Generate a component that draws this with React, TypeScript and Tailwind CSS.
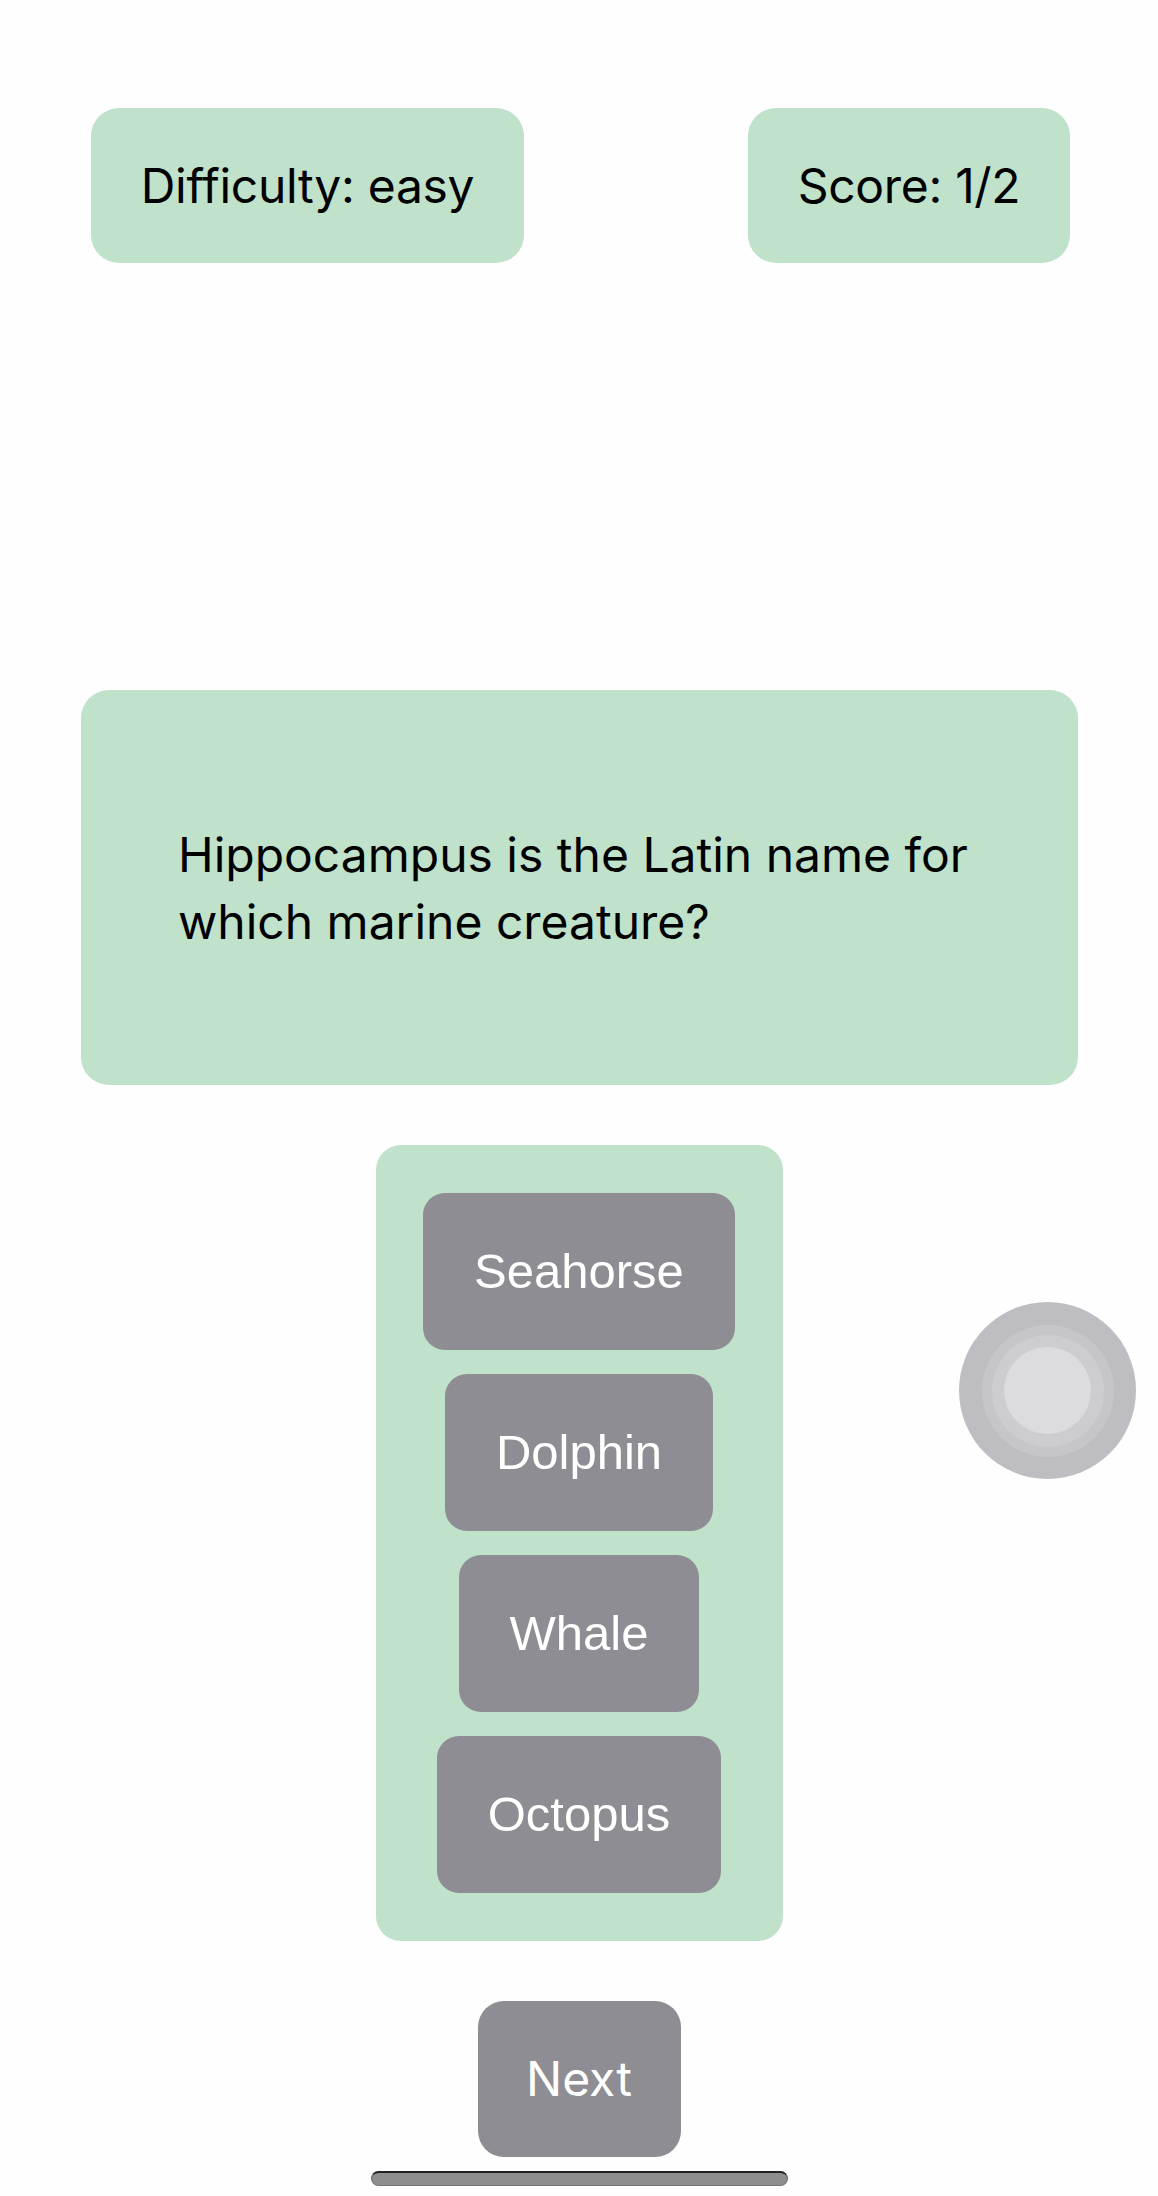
import React from "react";

const answers = ["Seahorse", "Dolphin", "Whale", "Octopus"];

export default function App() {
  return (
    <div className="relative w-[1158px] h-[2196px] bg-[#fefefe] [font-family:Inter,'Noto_Sans',sans-serif] text-black overflow-hidden">
      <div className="flex flex-col">
        <div className="flex justify-between pt-[108px] pl-[91px] pr-[88px]">
          <div className="h-[155px] w-[433px] rounded-[28px] bg-[#c0e1ca] flex items-center justify-center text-[48px] tracking-[-0.3px]">
            Difficulty: easy
          </div>
          <div className="h-[155px] w-[322px] rounded-[28px] bg-[#c0e1ca] flex items-center justify-center text-[48px] tracking-[-0.3px]">
            Score: 1/2
          </div>
        </div>

        <div className="mt-[427px] ml-[81px] mr-[80px] h-[395px] rounded-[28px] bg-[#c0e1ca] flex items-center pl-[97px] pr-[40px]">
          <p className="text-[48px] leading-[67px] whitespace-nowrap">
            Hippocampus is the Latin name for
            <br />
            which marine creature?
          </p>
        </div>

        <div className="mt-[60px] self-center w-[407px] h-[796px] rounded-[25px] bg-[#c0e1ca] flex flex-col items-center pt-[48px] gap-[24px]">
          {answers.map((a) => (
            <div
              key={a}
              className="h-[157px] px-[51px] rounded-[22px] bg-[#8e8d93] text-white flex items-center justify-center text-[49px] [font-family:'Liberation_Sans',Arial,sans-serif]"
            >
              {a}
            </div>
          ))}
        </div>

        <div className="mt-[60px] self-center h-[156px] w-[203px] rounded-[26px] bg-[#8e8d93] text-white flex items-center justify-center text-[48px]">
          Next
        </div>

        <div className="mt-[14px] self-center w-[417px] h-[15px] rounded-full bg-[#8e8e8e] border-t-2 border-t-[#222] border-x border-b border-x-[#666] border-b-[#777]" />
      </div>

      <div className="absolute left-[959px] top-[1302px] w-[177px] h-[177px] rounded-full bg-[#bebdc1] flex items-center justify-center">
        <div className="w-[132px] h-[132px] rounded-full bg-[#c6c5c9] flex items-center justify-center">
          <div className="w-[112px] h-[112px] rounded-full bg-[#cdccd0] flex items-center justify-center">
            <div className="w-[87px] h-[87px] rounded-full bg-[#dcdbde]" />
          </div>
        </div>
      </div>
    </div>
  );
}
